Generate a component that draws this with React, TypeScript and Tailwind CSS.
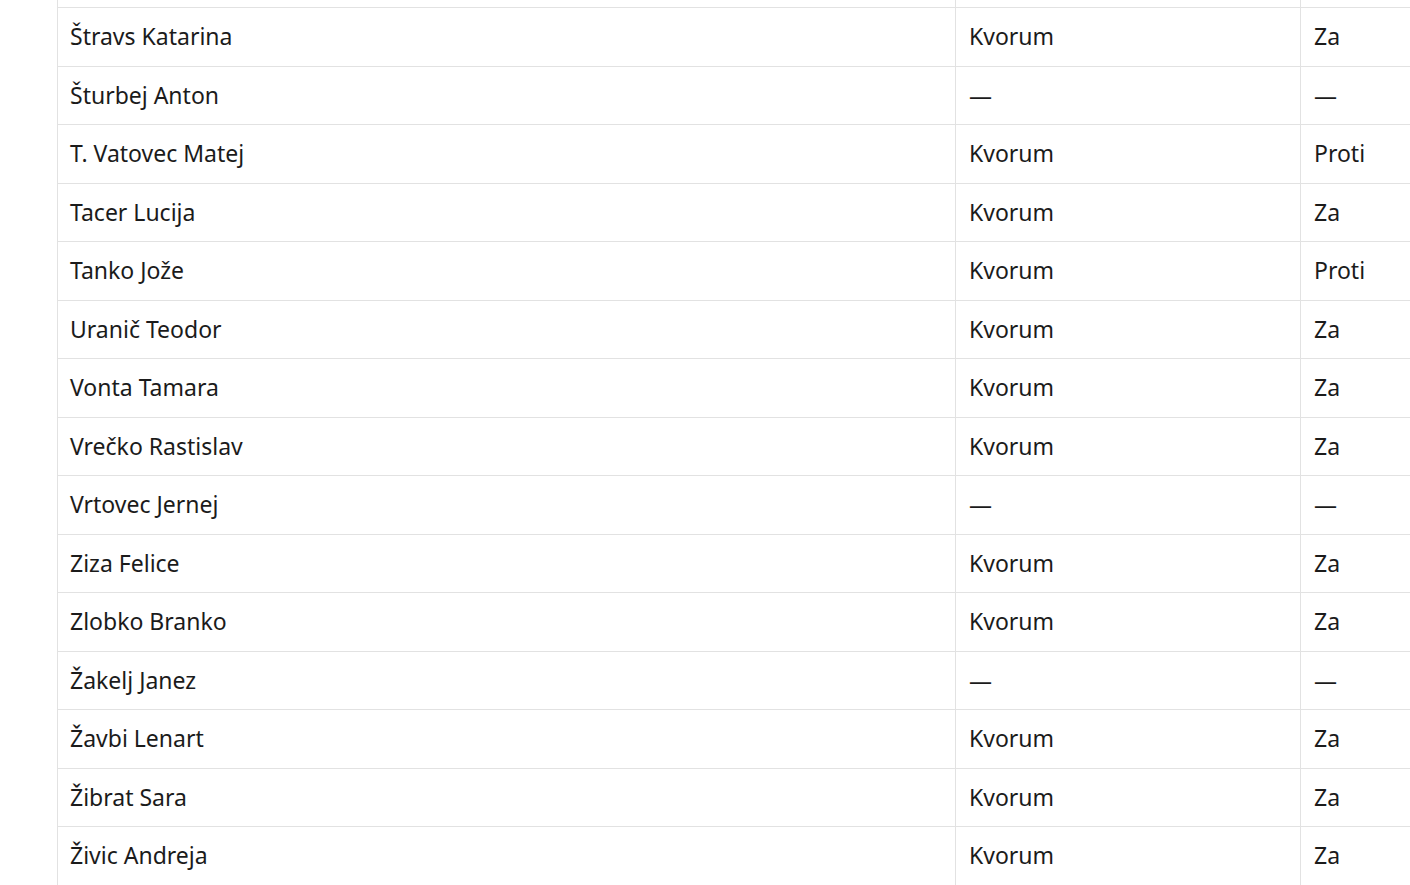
const rows: [string, string, string][] = [
  ["Štravs Katarina", "Kvorum", "Za"],
  ["Šturbej Anton", "—", "—"],
  ["T. Vatovec Matej", "Kvorum", "Proti"],
  ["Tacer Lucija", "Kvorum", "Za"],
  ["Tanko Jože", "Kvorum", "Proti"],
  ["Uranič Teodor", "Kvorum", "Za"],
  ["Vonta Tamara", "Kvorum", "Za"],
  ["Vrečko Rastislav", "Kvorum", "Za"],
  ["Vrtovec Jernej", "—", "—"],
  ["Ziza Felice", "Kvorum", "Za"],
  ["Zlobko Branko", "Kvorum", "Za"],
  ["Žakelj Janez", "—", "—"],
  ["Žavbi Lenart", "Kvorum", "Za"],
  ["Žibrat Sara", "Kvorum", "Za"],
  ["Živic Andreja", "Kvorum", "Za"],
];

export default function App() {
  return (
    <div
      className="w-[1410px] h-[885px] overflow-hidden bg-white text-[#1b1b1b]"
      style={{ fontFamily: '"Noto Sans", "Open Sans", sans-serif' }}
    >
      <div className="ml-[57px] w-[1500px] border-l border-[#e2e2e2]">
        <div className="grid grid-cols-[897px_345px_1fr] h-[7px]">
          <div />
          <div className="border-l border-[#e2e2e2]" />
          <div className="border-l border-[#e2e2e2]" />
        </div>
        {rows.map(([name, q, v], i) => (
          <div
            key={i}
            className="grid grid-cols-[897px_345px_1fr] h-[58.5px] border-t border-[#e2e2e2] text-[23px] leading-none"
          >
            <div className="flex items-center pl-[12px]">{name}</div>
            <div className="flex items-center pl-[13px] border-l border-[#e2e2e2]">{q}</div>
            <div className="flex items-center pl-[13px] border-l border-[#e2e2e2]">{v}</div>
          </div>
        ))}
        <div className="border-t border-[#e2e2e2]" />
      </div>
    </div>
  );
}
